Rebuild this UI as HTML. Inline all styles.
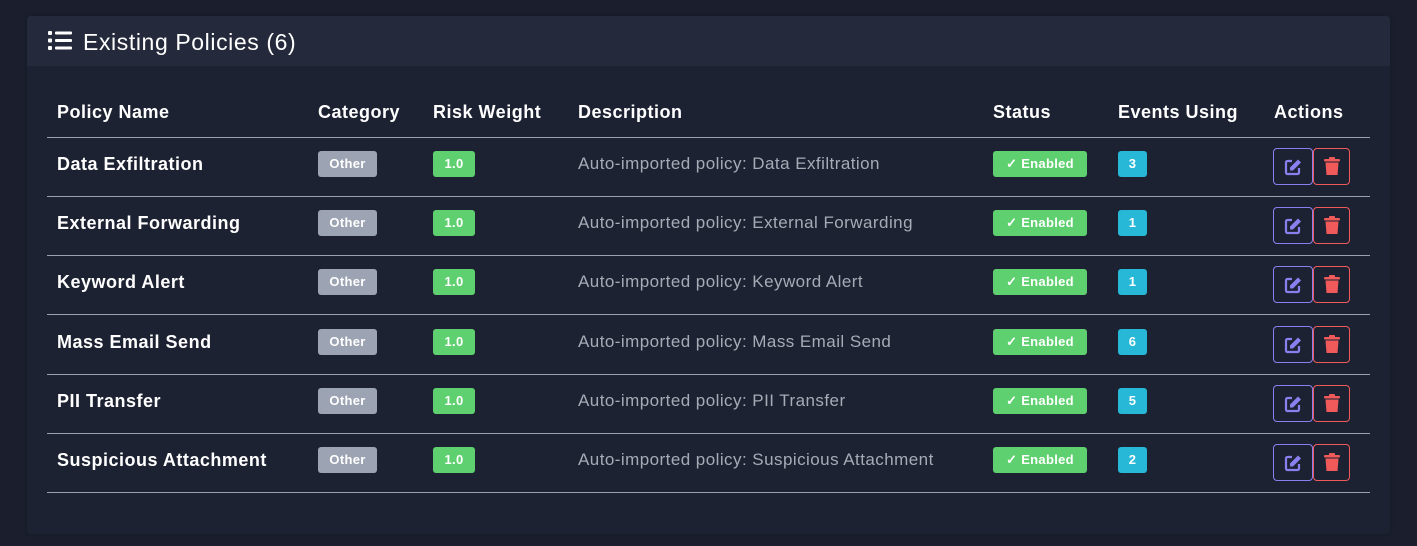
<!DOCTYPE html>
<html><head><style>
body{margin:0;width:1417px;height:546px;background:#1b1f2d;font-family:"Liberation Sans",sans-serif;overflow:hidden;position:relative}
.card{position:absolute;left:27px;top:16px;width:1363px;height:518px;background:#1d2232;border-radius:4px;box-shadow:0 0 3px #151925}
.hdr{position:absolute;left:0;top:0;width:100%;height:50px;background:#242a3b;border-radius:4px 4px 0 0}
.title{position:absolute;color:#fff;font-size:23px;letter-spacing:0.6px}
.th{position:absolute;top:102px;color:#fff;font-weight:bold;font-size:18px;letter-spacing:0.5px}
.line{position:absolute;left:47px;width:1323px;height:1px;background:#9aa0ad}
.nm{position:absolute;left:57px;color:#fff;font-weight:bold;font-size:18px;letter-spacing:0.5px}
.b{position:absolute;height:26px;line-height:26px;border-radius:3px;color:#fff;font-weight:bold;font-size:13px;text-align:center;letter-spacing:0.3px}
.desc{position:absolute;left:578px;color:#a6abb6;font-size:17px;letter-spacing:0.45px}
.btn{position:absolute;border:1px solid;border-radius:4px;box-sizing:border-box}
</style></head><body>
<div class="card"><div class="hdr"></div></div>
<svg style="position:absolute;left:47px;top:30px" width="26" height="21" viewBox="0 0 26 21"><g fill="#fff"><rect x="1" y="1" width="4" height="4" rx="1"/><rect x="1" y="8.5" width="4" height="4" rx="1"/><rect x="1" y="16" width="4" height="4" rx="1"/><rect x="8" y="1.5" width="17" height="3" rx="1"/><rect x="8" y="9" width="17" height="3" rx="1"/><rect x="8" y="16.5" width="17" height="3" rx="1"/></g></svg>
<div class="title" style="top:29px;left:83px">Existing Policies (6)</div>
<div class="th" style="left:57px">Policy Name</div>
<div class="th" style="left:318px">Category</div>
<div class="th" style="left:433px">Risk Weight</div>
<div class="th" style="left:578px">Description</div>
<div class="th" style="left:993px">Status</div>
<div class="th" style="left:1118px">Events Using</div>
<div class="th" style="left:1274px">Actions</div>
<div class="line" style="top:137px"></div>
<div id="rows"></div>
<script>
var d=[["Data Exfiltration",3],["External Forwarding",1],["Keyword Alert",1],["Mass Email Send",6],["PII Transfer",5],["Suspicious Attachment",2]];
var h="";
d.forEach(function(r,i){var c=163+i*59.2;var t=Math.round(c);
h+='<div class="nm" style="top:'+(t-9)+'px">'+r[0]+'</div>';
h+='<div class="b" style="left:318px;top:'+(t-12)+'px;width:59px;background:#9ca3b3">Other</div>';
h+='<div class="b" style="left:433px;top:'+(t-12)+'px;width:42px;background:#5fd06f">1.0</div>';
h+='<div class="desc" style="top:'+(t-9)+'px">Auto-imported policy: '+r[0]+'</div>';
h+='<div class="b" style="left:993px;top:'+(t-12)+'px;width:94px;background:#5fd06f">&#10003; Enabled</div>';
h+='<div class="b" style="left:1118px;top:'+(t-12)+'px;width:29px;background:#26b8d6">'+r[1]+'</div>';
h+='<div class="btn" style="left:1273px;top:'+(t-15)+'px;border-color:#8b7ff0;width:40px;height:37px"><svg style="position:absolute;left:10px;top:9px" width="19" height="18" viewBox="0 0 19 18"><path d="M8 3H3.5A1.5 1.5 0 0 0 2 4.5v10A1.5 1.5 0 0 0 3.5 16h10a1.5 1.5 0 0 0 1.5-1.5V10" fill="none" stroke="#8b7ff0" stroke-width="2.2"/><path d="M14 1.5l3 3-8 8H6v-3z" fill="#8b7ff0"/></svg></div>';
h+='<div class="btn" style="left:1313px;top:'+(t-15)+'px;border-color:#f05a5a;width:37px;height:37px"><svg style="position:absolute;left:10px;top:8px" width="16" height="19" viewBox="0 0 16 19"><rect x="0" y="2" width="16" height="2.5" rx="1" fill="#f05a5a"/><rect x="5" y="0" width="6" height="3" rx="1" fill="#f05a5a"/><path d="M1.5 5.5h13l-1 12.5h-11z" fill="#f05a5a"/></svg></div>';
h+='<div class="line" style="top:'+Math.round(196+i*59.2)+'px"></div>';
});
document.getElementById("rows").innerHTML=h;
</script>
</body></html>
